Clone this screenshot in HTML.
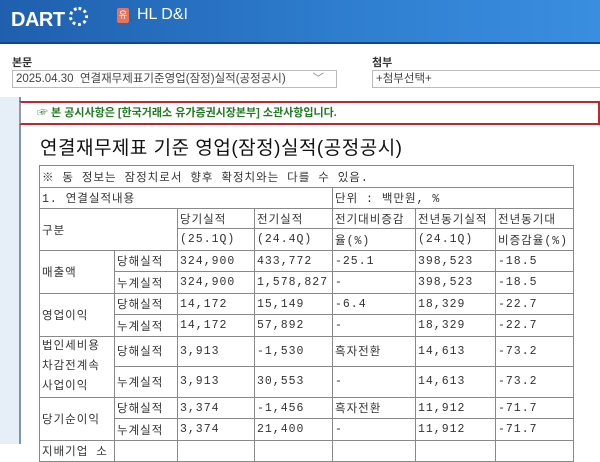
<!DOCTYPE html>
<html><head><meta charset="utf-8"><style>
body{margin:0;width:600px;height:444px;overflow:hidden;background:#fff;font-family:"Liberation Sans","Noto Sans CJK KR",sans-serif;position:relative}
.hdr{position:absolute;left:0;top:0;width:600px;height:42px;background:linear-gradient(90deg,#1f5fae,#2f7fd0 60%,#3a8ee0);border-bottom:2px solid #17457f}
.logo{position:absolute;left:11px;top:9px;color:#fff;font-weight:bold;font-size:20px;letter-spacing:-0.5px}
.ball{position:absolute;left:69px;top:7px;width:19px;height:19px;border-radius:50%;border:3px dotted #fff;box-sizing:border-box}
.yu{position:absolute;left:117px;top:8px;width:12px;height:15px;background:#e8735a;color:#fff;font-size:9px;text-align:center;line-height:15px;border-radius:2px}
.co{position:absolute;left:137px;top:6px;color:#fff;font-size:16px}
.lbl{position:absolute;top:54px;font-size:11px;font-weight:bold;color:#333}
.sel{position:absolute;top:70px;height:16px;border:1px solid #bbb;font-size:11.5px;color:#444;line-height:16px;padding-left:3px;box-sizing:content-box}
.side{position:absolute;left:0;top:97px;width:19px;height:347px;background:#e6eef8;border-right:2px solid #7f93ad}
.note{position:absolute;left:19px;top:101px;width:581px;height:24px;border:2px solid #c0282f;border-left:2px solid #999;box-sizing:border-box;font-size:11px;font-weight:bold;color:#1f7a1f;line-height:20px;padding-left:16px}
.title{position:absolute;left:40px;top:133px;font-size:19px;color:#111;letter-spacing:0.5px}
table{position:absolute;left:39px;top:165px;border-collapse:collapse;table-layout:fixed;width:534px;font-family:"Liberation Mono","Noto Sans CJK KR",monospace;font-size:11.5px;color:#333}
td{border:1px solid #888;padding:0 2px;white-space:nowrap;letter-spacing:1px;overflow:hidden}
</style></head><body>
<div class="hdr"><div class="logo">DART</div><div class="ball"></div><div class="yu">유</div><div class="co">HL D&amp;I</div></div>
<div class="lbl" style="left:12px">본문</div>
<div class="sel" style="left:12px;width:320px">2025.04.30 &nbsp;연결재무제표기준영업(잠정)실적(공정공시)<span style="position:absolute;right:12px;color:#888">﹀</span></div>
<div class="lbl" style="left:372px">첨부</div>
<div class="sel" style="left:372px;width:230px">+첨부선택+</div>
<div class="side"></div>
<div class="note">☞ 본 공시사항은 [한국거래소 유가증권시장본부] 소관사항입니다.</div>
<div class="title">연결재무제표 기준 영업(잠정)실적(공정공시)</div>
<table>
<colgroup><col style="width:75px"><col style="width:63px"><col style="width:77px"><col style="width:78px"><col style="width:83px"><col style="width:80px"><col style="width:78px"></colgroup>
<tr style="height:22px"><td colspan="7">※ 동 정보는 잠정치로서 향후 확정치와는 다를 수 있음.</td></tr>
<tr style="height:21px"><td colspan="4">1. 연결실적내용</td><td colspan="3">단위 : 백만원, %</td></tr>
<tr style="height:20px"><td colspan="2" rowspan="2">구분</td><td>당기실적</td><td>전기실적</td><td>전기대비증감</td><td>전년동기실적</td><td>전년동기대</td></tr>
<tr style="height:22px"><td>(25.1Q)</td><td>(24.4Q)</td><td>율(%)</td><td>(24.1Q)</td><td>비증감율(%)</td></tr>
<tr style="height:21px"><td rowspan="2">매출액</td><td>당해실적</td><td>324,900</td><td>433,772</td><td>-25.1</td><td>398,523</td><td>-18.5</td></tr>
<tr style="height:22px"><td>누계실적</td><td>324,900</td><td>1,578,827</td><td>-</td><td>398,523</td><td>-18.5</td></tr>
<tr style="height:21px"><td rowspan="2">영업이익</td><td>당해실적</td><td>14,172</td><td>15,149</td><td>-6.4</td><td>18,329</td><td>-22.7</td></tr>
<tr style="height:22px"><td>누계실적</td><td>14,172</td><td>57,892</td><td>-</td><td>18,329</td><td>-22.7</td></tr>
<tr style="height:29px"><td rowspan="2" style="line-height:20px">법인세비용<br>차감전계속<br>사업이익</td><td>당해실적</td><td>3,913</td><td>-1,530</td><td>흑자전환</td><td>14,613</td><td>-73.2</td></tr>
<tr style="height:30px"><td>누계실적</td><td>3,913</td><td>30,553</td><td>-</td><td>14,613</td><td>-73.2</td></tr>
<tr style="height:21px"><td rowspan="2">당기순이익</td><td>당해실적</td><td>3,374</td><td>-1,456</td><td>흑자전환</td><td>11,912</td><td>-71.7</td></tr>
<tr style="height:22px"><td>누계실적</td><td>3,374</td><td>21,400</td><td>-</td><td>11,912</td><td>-71.7</td></tr>
<tr style="height:21px"><td>지배기업 소</td><td></td><td></td><td></td><td></td><td></td><td></td></tr>
</table>
</body></html>
